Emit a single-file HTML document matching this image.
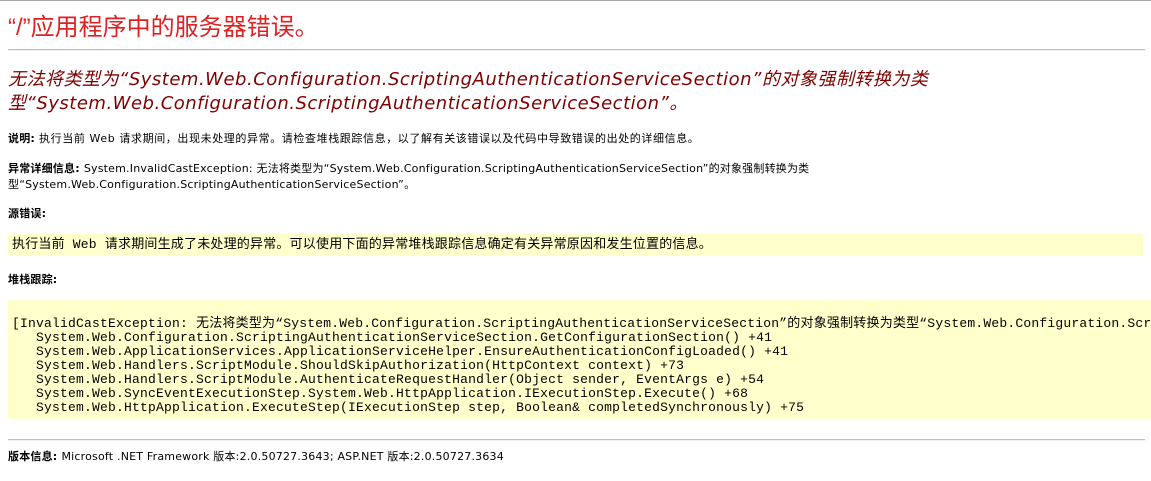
<!DOCTYPE html>
<html><head><meta charset="utf-8"><style>
html,body{margin:0;padding:0;background:#fff;width:1151px;height:481px;overflow:hidden;position:relative}
body{font-family:"Liberation Sans","Noto Sans CJK SC",sans-serif;color:#000;border-top:1px solid #aaa;box-sizing:border-box}
.a{position:absolute;white-space:nowrap}
h1{position:absolute;margin:0;left:8px;top:6px;font-weight:normal;font-size:24px;color:#dd2222;font-family:"Liberation Sans","Noto Sans CJK SC",sans-serif;white-space:nowrap}
.hr{position:absolute;left:8px;width:1137px;height:0;border-top:1px solid #c0c0c0;border-bottom:1px solid #eee}
.h2{position:absolute;left:8px;font-style:italic;font-size:18px;color:#800000;white-space:nowrap;font-family:"DejaVu Sans","Noto Sans CJK SC",sans-serif;letter-spacing:0.5px}
.t{font-size:11px;left:8px;font-family:"DejaVu Sans","Noto Sans CJK SC",sans-serif;letter-spacing:0.2px}
b{font-weight:bold}
.box{position:absolute;left:8px;background:#ffffcc;overflow:hidden}
.mono{font-family:"Liberation Mono","Noto Sans CJK SC",monospace;font-size:13px;white-space:pre;line-height:14px;position:absolute;letter-spacing:0.2px}
</style></head><body>
<h1>“/”应用程序中的服务器错误。</h1>
<div class="hr" style="top:48px"></div>
<div class="h2" style="top:64px">无法将类型为“System.Web.Configuration.ScriptingAuthenticationServiceSection”的对象强制转换为类</div>
<div class="h2" style="top:88px">型“System.Web.Configuration.ScriptingAuthenticationServiceSection”。</div>
<div class="a t" style="top:129px"><b>说明: </b><span style="letter-spacing:0.6px">执行当前 Web 请求期间，出现未处理的异常。请检查堆栈跟踪信息，以了解有关该错误以及代码中导致错误的出处的详细信息。</span></div>
<div class="a t" style="top:159px"><b>异常详细信息: </b>System.InvalidCastException: 无法将类型为“System.Web.Configuration.ScriptingAuthenticationServiceSection”的对象强制转换为类</div>
<div class="a t" style="top:175px">型“System.Web.Configuration.ScriptingAuthenticationServiceSection”。</div>
<div class="a t" style="top:204px"><b>源错误:</b></div>
<div class="box" style="top:233px;height:22px;width:1135px"><div class="mono" style="left:4px;top:4px">执行当前 Web 请求期间生成了未处理的异常。可以使用下面的异常堆栈跟踪信息确定有关异常原因和发生位置的信息。</div></div>
<div class="a t" style="top:270px"><b>堆栈跟踪:</b></div>
<div class="box" style="top:299px;height:119px;width:1143px"><div class="mono" style="left:4px;top:17px">[InvalidCastException: 无法将类型为“System.Web.Configuration.ScriptingAuthenticationServiceSection”的对象强制转换为类型“System.Web.Configuration.ScriptingAuthenticationServiceSection”。]
   System.Web.Configuration.ScriptingAuthenticationServiceSection.GetConfigurationSection() +41
   System.Web.ApplicationServices.ApplicationServiceHelper.EnsureAuthenticationConfigLoaded() +41
   System.Web.Handlers.ScriptModule.ShouldSkipAuthorization(HttpContext context) +73
   System.Web.Handlers.ScriptModule.AuthenticateRequestHandler(Object sender, EventArgs e) +54
   System.Web.SyncEventExecutionStep.System.Web.HttpApplication.IExecutionStep.Execute() +68
   System.Web.HttpApplication.ExecuteStep(IExecutionStep step, Boolean&amp; completedSynchronously) +75</div></div>
<div class="hr" style="top:438px"></div>
<div class="a t" style="top:447px"><b>版本信息: </b>Microsoft .NET Framework 版本:2.0.50727.3643; ASP.NET 版本:2.0.50727.3634</div>
</body></html>
